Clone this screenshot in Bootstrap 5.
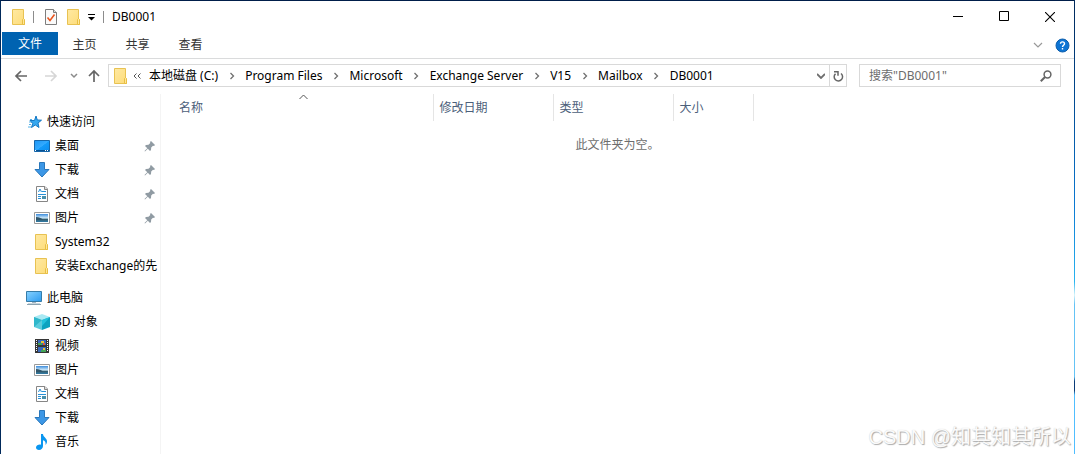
<!DOCTYPE html>
<html lang="zh-CN">
<head>
<meta charset="utf-8">
<meta name="viewport" content="width=device-width, initial-scale=1">
<title>DB0001</title>
<link href="https://cdn.jsdelivr.net/npm/bootstrap@5.3.0/dist/css/bootstrap.min.css" rel="stylesheet">
<style>
  body { font-family: "Noto Sans", "Noto Sans CJK SC", sans-serif; font-size: 12px; line-height: 16px; color: #000; background: #fff; }
  svg { display: block; flex: none; }
  button { font: inherit; color: inherit; background: none; border: 0; padding: 0; }
  a { color: inherit; text-decoration: none; }
  .window { min-height: 100vh; border-top: 1px solid #001e4a; border-left: 1px solid #00295a; }
  .desktop-edge { width: 1px; background: linear-gradient(#00285a 0, #00468c 20%, #0a78d2 45%, #28b4f0 62%, #d8f4fa 65%, #64c3f5 67%, #64c3f5 83%, #0a3c78 84%, #0a3c78 86%, #50beff 87%); }
  .title-bar { height: 31px; padding: 0 1px 0 10px; }
  .caption-btn { width: 46px; height: 31px; display: flex; align-items: center; justify-content: center; }
  .divider { width: 1px; height: 12px; background: #8c8c8c; }
  .quick-tools { gap: 8px; padding: 0 8px 0 10px; }
  .ribbon { height: 27px; border-bottom: 1px solid #dadbdc; padding-left: 1px; }
  .file-tab { width: 56px; height: 23px; background: #0063b1; color: #fff; }
  .ribbon-tab { width: 53px; height: 25px; color: #333; }
  .toolbar-row { height: 34px; padding: 5px 13px 6px 13px; }
  .boxed { border: 1px solid #d9d9d9; height: 23px; }
  .history { margin: 0 7px; }
  .crumb-sep { width: 27px; display: flex; justify-content: center; }
  .refresh { width: 17px; height: 21px; border-left: 1px solid #d9d9d9; }
  .search { width: 202px; margin-left: 12px; }
  .search input { font: inherit; border: 0; outline: 0; padding: 0 0 0 9px; min-width: 0; background: none; }
  .search input::placeholder { color: #6d6d6d; opacity: 1; }
  .panes { padding-top: 1px; }
  .side { width: 160px; padding-top: 16px; border-right: 1px solid #f4f4f4; }
  .side-row { height: 24px; display: flex; align-items: center; white-space: nowrap; overflow: hidden; }
  .side-top { padding-left: 25px; gap: 5px; }
  .side-item { padding-left: 33px; gap: 5px; }
  .side-item span { flex: 1; }
  .side-item .pin { margin-right: 4px; }
  .side-group + .side-group { margin-top: 8px; }
  .files { table-layout: fixed; width: 592px; }
  .files th { height: 27px; padding: 0 0 0 6px; font-weight: 400; color: #4c607a; border-right: 1px solid #e5e5e5; position: relative; vertical-align: middle; }
  .files th:first-child { padding-left: 18px; }
  .sort { position: absolute; top: 0; left: 138px; }
  .empty { color: #6d6d6d; margin-top: 16px; }
  .watermark { position: absolute; right: 4px; bottom: 5px; font-family: "Liberation Sans", "Noto Sans CJK SC", sans-serif; font-size: 20px; line-height: 24px; color: #fafafa; text-shadow: 1px 1px 1px #aaa, 0 0 1px #ccc; white-space: nowrap; }
</style>
</head>
<body>
<svg width="0" height="0" class="position-absolute" aria-hidden="true">
  <defs>
    <linearGradient id="g-folder" x1="0" x2="1" y2="1"><stop stop-color="#ffe9a2"/><stop offset="1" stop-color="#fddc79"/></linearGradient>
    <linearGradient id="g-screen" x1="0" x2="1" y2="1"><stop stop-color="#1e96f5"/><stop offset=".5" stop-color="#32aaff"/><stop offset=".52" stop-color="#149bfa"/><stop offset="1" stop-color="#0a8cf0"/></linearGradient>
    <linearGradient id="g-sky" x2="0" y2="1"><stop stop-color="#3c8cdc"/><stop offset=".5" stop-color="#d2ebfa"/><stop offset=".65" stop-color="#41707d"/><stop offset="1" stop-color="#2d78a5"/></linearGradient>
    <linearGradient id="g-pc" x2="1" y2="1"><stop stop-color="#87d2ff"/><stop offset="1" stop-color="#2d9bf0"/></linearGradient>
    <symbol id="folder" viewBox="0 0 16 16"><path d="M1.5.5h11v10l1 .5v4.500h-12z" fill="url(#g-folder)" stroke="#e8c252"/><path d="M11.500 15.500v-5l1-1 1 1v5z" fill="#ffe69a" stroke="#e8bf43"/></symbol>
    <symbol id="star" viewBox="0 0 16 16"><path d="m10 2 1.300 4 4.200.2-3.500 2.800 1 4.500-3.700-2.500L5.500 13.500l1.200-4-2.700-3h4.500z" fill="#35a7ef" stroke="#1478c4"/><path d="M4 5.500h2M3 8h2M3 10.500h2M2 13h3" stroke="#56b2e7"/></symbol>
    <symbol id="desktop" viewBox="0 0 16 16"><path d="M.5 2.500h15v11H.5z" fill="url(#g-screen)" stroke="#1767aa"/><path d="M1 12.500h14" stroke="#075294"/><path d="M1 12.500h1m9 0h1m1 0h1" stroke="#fff"/></symbol>
    <symbol id="download" viewBox="0 0 16 16"><path d="M5.500.5h5v7h4.500L8 15 1 7.500h4.500z" fill="#3c97e6" stroke="#2a77ba"/></symbol>
    <symbol id="document" viewBox="0 0 16 16"><path d="M2.500.5H11L13.500 3v12.500h-11z" fill="#fff" stroke="#868686"/><path d="M10.500.5v3h3" fill="#ddd" stroke="#868686"/><path d="m4.500 6 1.500-3 1.500 3M4 8.500h8M8 5.500h4M4 10.500h3M4 12.500h3" fill="none" stroke="#2891d8"/><path d="M8 10h4v3H8z" fill="#4a90ac"/></symbol>
    <symbol id="picture" viewBox="0 0 16 16"><path d="M.5 2.500h15v11H.5z" fill="#fff" stroke="#9a9a9a"/><path d="M2 4h12v8H2z" fill="url(#g-sky)"/><path d="M2 7c3 0 5 1 7 2.500 2-.5 3-.5 5 0v.8H2z" fill="#31566b"/></symbol>
    <symbol id="pc" viewBox="0 0 16 16"><path d="M.5 1.500h15v10H.5z" fill="url(#g-pc)" stroke="#367ca8"/><path d="M6 12h4v1H6z" fill="#a5b7c4"/><path d="M1 14.500h14" stroke="#8ba2b0"/><path d="M2 13.500h12" stroke="#cbd7dd"/></symbol>
    <symbol id="cube" viewBox="0 0 16 16"><path d="M8 0 16 3 8 6 0 3z" fill="#a9e9f3"/><path d="M0 3l8 3v10l-8-3z" fill="#5bcbdc"/><path d="M16 3 8 6v10l8-3z" fill="#0ba2bf"/><path d="m0 3 8 3-8 7z" fill="#2fb7cb"/><path d="m8 6 8-3-8 9z" fill="#21c2dc"/></symbol>
    <symbol id="video" viewBox="0 0 16 16"><path d="M1 1h14v14H1z" fill="#363636"/><path d="M2.500 2v12M13.500 2v12" stroke="#fff" stroke-dasharray="1 1"/><path d="M4 2h8v5H4zM4 9h8v5H4z" fill="#3968bd"/><path d="M7 3h3v2H7zM9 10h2v2H9z" fill="#eac331"/><path d="M4 5h4v2H4zM7 12h5v2H7z" fill="#43a558"/><path d="M9 5h2v2H9z" fill="#d75b46"/></symbol>
    <symbol id="music" viewBox="0 0 16 16"><path d="M7 0h2c0 3 4 4 4 7.500 0 1.500-.7 2.700-1.500 3.500.5-3-.5-4.200-2.500-4.700V12c0 2.200-1.700 4-4 4-1.800 0-3-1-3-2.500C2 11.500 5 10 7 10.700z" fill="#0a96f0"/></symbol>
    <symbol id="pin" viewBox="0 0 12 12"><path d="m7 1 4 4-1 1-1-.3L7.200 7.500 7 10 6 11 3.800 8.700 1 11.500l-.5-.5L3.300 8.200 1 6l1-1 2.500-.2L6.300 3 6 2z" fill="#909ba3"/></symbol>
    <symbol id="chev" viewBox="0 0 6 8"><path d="m1.500 1 3 3-3 3" fill="none" stroke="#707070" stroke-width="1.300"/></symbol>
  </defs>
</svg>

<div class="d-flex position-relative">
<div class="window flex-grow-1 d-flex flex-column overflow-hidden">
  <header class="title-bar d-flex align-items-center">
    <svg class="me-2" width="14" height="16" viewBox="0 0 14 16"><use href="#folder" width="16" height="16"/></svg>
    <i class="divider"></i>
    <div class="quick-tools d-flex align-items-center">
      <button type="button" aria-label="属性"><svg width="14" height="16" viewBox="0 0 14 16"><path d="M1.500.5h8l3 3v12h-11z" fill="#fafafa" stroke="#7d7d7d"/><path d="M9.500.5v3h3" fill="#ddd" stroke="#7d7d7d"/><path d="m3.500 8.500 2.500 3 4.500-6" fill="none" stroke="#e8541e" stroke-width="1.600"/></svg></button>
      <button type="button" aria-label="新建文件夹"><svg width="14" height="16" viewBox="0 0 14 16"><use href="#folder" width="16" height="16"/></svg></button>
      <button type="button" aria-label="自定义快速访问工具栏"><svg width="7" height="8" viewBox="0 0 7 8"><path d="M0 1.500h7" stroke="#000"/><path d="M0 4h7L3.500 7.500z"/></svg></button>
    </div>
    <i class="divider me-2"></i>
    <span class="flex-grow-1">DB0001</span>
    <button type="button" class="caption-btn" aria-label="最小化"><svg width="10" height="11"><path d="M0 5.500h10" stroke="#000"/></svg></button>
    <button type="button" class="caption-btn" aria-label="最大化"><svg width="10" height="11"><path d="M.5.5h9v9h-9z" fill="none" stroke="#000"/></svg></button>
    <button type="button" class="caption-btn" aria-label="关闭"><svg width="10" height="10"><path d="m0 0 10 10m0-10-10 10" stroke="#000" stroke-width="1.100"/></svg></button>
  </header>

  <nav class="ribbon d-flex" aria-label="功能区">
    <button type="button" class="file-tab">文件</button>
    <button type="button" class="ribbon-tab">主页</button>
    <button type="button" class="ribbon-tab">共享</button>
    <button type="button" class="ribbon-tab">查看</button>
    <div class="ms-auto d-flex align-items-center gap-2 pe-1">
      <button type="button" class="me-1" aria-label="展开功能区"><svg width="10" height="6" viewBox="0 0 10 6"><path d="m1 1 4 4 4-4" fill="none" stroke="#999" stroke-width="1.200"/></svg></button>
      <button type="button" aria-label="帮助"><svg width="15" height="15" viewBox="0 0 15 15"><circle cx="7.500" cy="7.500" r="6.500" fill="#0c74d4" stroke="#0a5cab"/><path d="M5.500 5.700c0-2.500 4-2.500 4 0 0 1.500-2 1.600-2 3.300m0 1v1.500" fill="none" stroke="#fff" stroke-width="1.400"/></svg></button>
    </div>
  </nav>

  <div class="toolbar-row d-flex align-items-center">
    <button type="button" aria-label="后退"><svg width="14" height="12" viewBox="0 0 14 12"><path d="M13 6H2m5-5L2 6l5 5" fill="none" stroke="#666" stroke-width="1.700"/></svg></button>
    <button type="button" class="ms-3" aria-label="前进"><svg width="14" height="12" viewBox="0 0 14 12"><path d="M1 6h11M7 1l5 5-5 5" fill="none" stroke="#d6d6d6" stroke-width="1.700"/></svg></button>
    <button type="button" class="history" aria-label="最近浏览的位置"><svg width="16" height="6" viewBox="0 0 16 6"><path d="m6 1 3 3 3-3" fill="none" stroke="#8b8b8b" stroke-width="1.500"/></svg></button>
    <button type="button" aria-label="上移"><svg width="12" height="14" viewBox="0 0 12 14"><path d="M6 13V2M1 7l5-5 5 5" fill="none" stroke="#666" stroke-width="1.700"/></svg></button>
    <div class="boxed d-flex align-items-center flex-grow-1 ms-2">
      <svg class="ms-1" width="16" height="16"><use href="#folder"/></svg>
      <svg class="ms-1 me-2" width="8" height="8" viewBox="0 0 8 8"><path d="M3.500 1.500 1 4l2.500 2.500M7.500 1.500 5 4l2.500 2.500" fill="none" stroke="#555"/></svg>
      <nav class="d-flex align-items-center text-nowrap" aria-label="地址">
        <a href="#">本地磁盘 (C:)</a><span class="crumb-sep"><svg width="6" height="8"><use href="#chev"/></svg></span>
        <a href="#">Program Files</a><span class="crumb-sep"><svg width="6" height="8"><use href="#chev"/></svg></span>
        <a href="#">Microsoft</a><span class="crumb-sep"><svg width="6" height="8"><use href="#chev"/></svg></span>
        <a href="#">Exchange Server</a><span class="crumb-sep"><svg width="6" height="8"><use href="#chev"/></svg></span>
        <a href="#">V15</a><span class="crumb-sep"><svg width="6" height="8"><use href="#chev"/></svg></span>
        <a href="#">Mailbox</a><span class="crumb-sep"><svg width="6" height="8"><use href="#chev"/></svg></span>
        <a href="#">DB0001</a>
      </nav>
      <button type="button" class="ms-auto me-1" aria-label="以前的位置"><svg width="8" height="6" viewBox="0 0 8 6"><path d="m0 1 4 4 4-4" fill="none" stroke="#6e6e6e" stroke-width="1.800"/></svg></button>
      <button type="button" class="refresh d-flex align-items-center justify-content-center" aria-label="刷新"><svg width="12" height="12" viewBox="0 0 12 12"><path d="M9 3.500a4.200 4.200 0 1 1-5.500.2M2 1.700h4v4" fill="none" stroke="#666" stroke-width="1.500"/></svg></button>
    </div>
    <form class="search boxed d-flex align-items-center">
      <input type="search" class="flex-grow-1" aria-label="搜索" placeholder='搜索"DB0001"'>
      <button type="button" class="me-2" aria-label="开始搜索"><svg width="12" height="12" viewBox="0 0 12 12"><circle cx="7.500" cy="4.500" r="3.400" fill="none" stroke="#666" stroke-width="1.500"/><path d="M5 7 .8 11.200" stroke="#666" stroke-width="2"/></svg></button>
    </form>
  </div>

  <div class="panes d-flex flex-grow-1">
    <nav class="side flex-shrink-0" aria-label="导航窗格">
      <div class="side-group">
        <a href="#" class="side-row side-top"><svg width="16" height="16"><use href="#star"/></svg>快速访问</a>
        <a href="#" class="side-row side-item"><svg width="16" height="16"><use href="#desktop"/></svg><span>桌面</span><svg class="pin" width="12" height="12"><use href="#pin"/></svg></a>
        <a href="#" class="side-row side-item"><svg width="16" height="16"><use href="#download"/></svg><span>下载</span><svg class="pin" width="12" height="12"><use href="#pin"/></svg></a>
        <a href="#" class="side-row side-item"><svg width="16" height="16"><use href="#document"/></svg><span>文档</span><svg class="pin" width="12" height="12"><use href="#pin"/></svg></a>
        <a href="#" class="side-row side-item"><svg width="16" height="16"><use href="#picture"/></svg><span>图片</span><svg class="pin" width="12" height="12"><use href="#pin"/></svg></a>
        <a href="#" class="side-row side-item"><svg width="16" height="16"><use href="#folder"/></svg><span>System32</span></a>
        <a href="#" class="side-row side-item"><svg width="16" height="16"><use href="#folder"/></svg><span>安装Exchange的先</span></a>
      </div>
      <div class="side-group">
        <a href="#" class="side-row side-top"><svg width="16" height="16"><use href="#pc"/></svg>此电脑</a>
        <a href="#" class="side-row side-item"><svg width="16" height="16"><use href="#cube"/></svg><span>3D 对象</span></a>
        <a href="#" class="side-row side-item"><svg width="16" height="16"><use href="#video"/></svg><span>视频</span></a>
        <a href="#" class="side-row side-item"><svg width="16" height="16"><use href="#picture"/></svg><span>图片</span></a>
        <a href="#" class="side-row side-item"><svg width="16" height="16"><use href="#document"/></svg><span>文档</span></a>
        <a href="#" class="side-row side-item"><svg width="16" height="16"><use href="#download"/></svg><span>下载</span></a>
        <a href="#" class="side-row side-item"><svg width="16" height="16"><use href="#music"/></svg><span>音乐</span></a>
      </div>
    </nav>
    <main class="flex-grow-1">
      <table class="files">
        <colgroup><col style="width:272px"><col style="width:120px"><col style="width:120px"><col style="width:80px"></colgroup>
        <thead><tr>
          <th scope="col">名称<svg class="sort" width="9" height="6" viewBox="0 0 9 6"><path d="m.5 5 4-4 4 4" fill="none" stroke="#555"/></svg></th>
          <th scope="col">修改日期</th><th scope="col">类型</th><th scope="col">大小</th>
        </tr></thead>
      </table>
      <p class="empty text-center mb-0">此文件夹为空。</p>
    </main>
  </div>
</div>
<div class="desktop-edge flex-shrink-0"></div>
<div class="watermark">CSDN @知其知其所以</div>
</div>
<script src="https://cdn.jsdelivr.net/npm/bootstrap@5.3.0/dist/js/bootstrap.bundle.min.js"></script>
</body>
</html>
